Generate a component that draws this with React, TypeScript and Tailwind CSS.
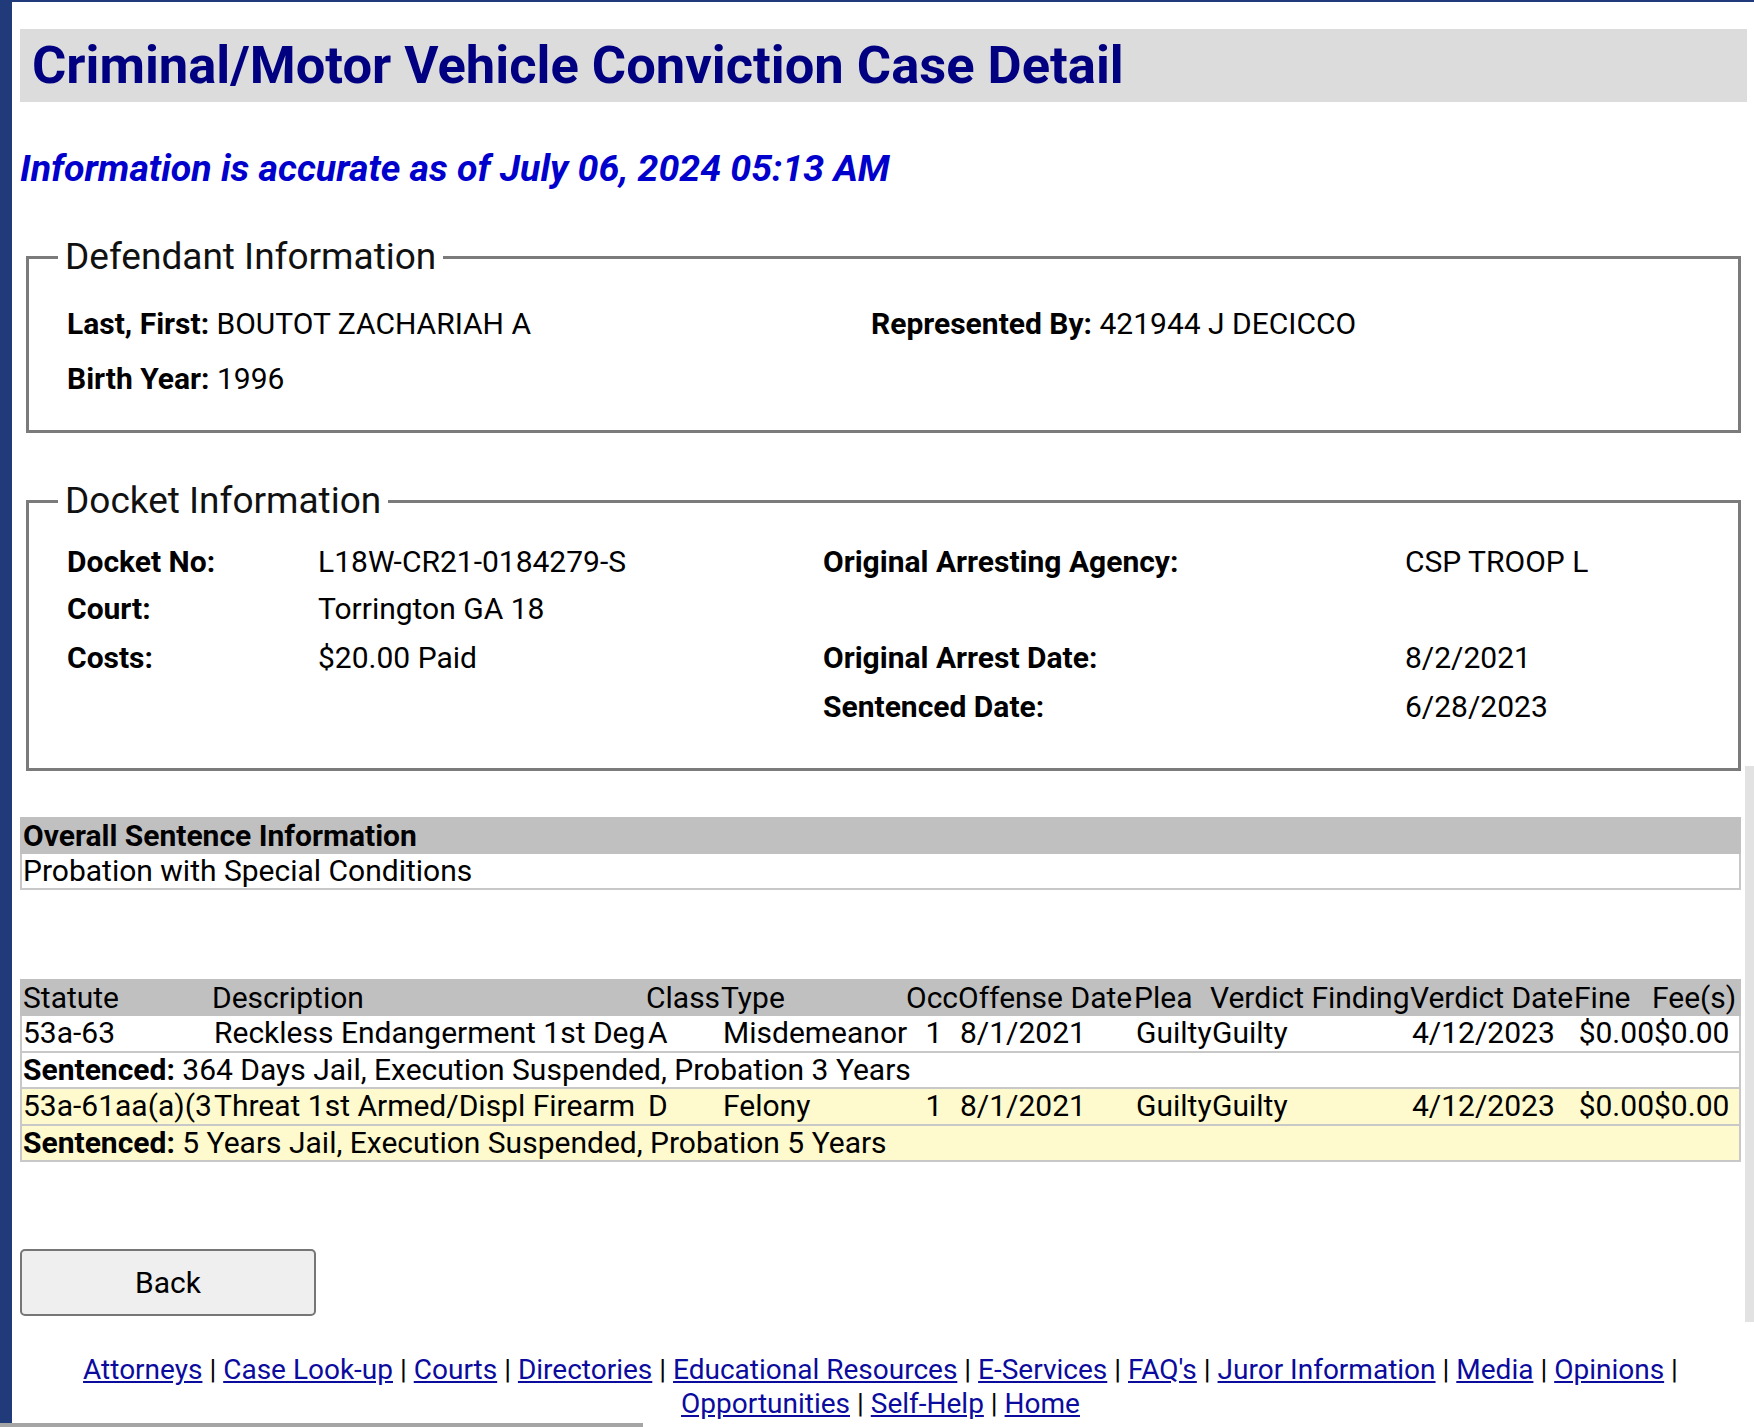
import React from 'react'

const cols = 'grid grid-cols-[192px_434px_75px_185px_52px_176px_76px_200px_164px_78px_1fr] whitespace-nowrap'

const charges = [
  {
    statute: '53a-63',
    desc: 'Reckless Endangerment 1st Deg',
    cls: 'A',
    type: 'Misdemeanor',
    occ: '1',
    offense: '8/1/2021',
    plea: 'Guilty',
    finding: 'Guilty',
    verdict: '4/12/2023',
    fine: '$0.00',
    fee: '$0.00',
    sentence: '364 Days Jail, Execution Suspended, Probation 3 Years',
    yellow: false,
  },
  {
    statute: '53a-61aa(a)(3',
    desc: 'Threat 1st Armed/Displ Firearm',
    cls: 'D',
    type: 'Felony',
    occ: '1',
    offense: '8/1/2021',
    plea: 'Guilty',
    finding: 'Guilty',
    verdict: '4/12/2023',
    fine: '$0.00',
    fee: '$0.00',
    sentence: '5 Years Jail, Execution Suspended, Probation 5 Years',
    yellow: true,
  },
]

const links = [
  'Attorneys',
  'Case Look-up',
  'Courts',
  'Directories',
  'Educational Resources',
  'E-Services',
  "FAQ's",
  'Juror Information',
  'Media',
  'Opinions',
]

function Legend({ children }: { children: React.ReactNode }) {
  return <legend className="px-[7px] text-[37px] leading-[38px] text-[#111]">{children}</legend>
}

export default function App() {
  return (
    <div className="relative min-h-screen overflow-hidden border-l-[12px] border-t-2 border-[#213a7a] bg-white font-['Roboto','Liberation_Sans',sans-serif] text-black">
      <div className="pl-2 pr-[7px] pb-10">
        {/* Title */}
        <div className="mt-[27px] flex h-[73px] items-center bg-[#dcdcdc] pl-3">
          <h1 className="text-[52.5px] font-bold leading-none text-[#000080]">
            Criminal/Motor Vehicle Conviction Case Detail
          </h1>
        </div>

        <p className="mt-[46px] text-[37.5px] font-bold italic leading-[40px] text-[#0000cd]">
          Information is accurate as of July 06, 2024 05:13 AM
        </p>

        {/* Defendant */}
        <fieldset className="mx-[6px] mt-[50px] border-[3px] border-[#7b7b7b] pl-[29px] pb-[24px] pt-[20px]">
          <Legend>Defendant Information</Legend>
          <div className="grid grid-cols-[804px_1fr] grid-rows-[55px_55px] items-center pl-[9px] text-[30px]">
            <div>
              <span className="font-bold">Last, First:</span> BOUTOT ZACHARIAH A
            </div>
            <div>
              <span className="font-bold">Represented By:</span> 421944 J DECICCO
            </div>
            <div>
              <span className="font-bold">Birth Year:</span> 1996
            </div>
            <div />
          </div>
        </fieldset>

        {/* Docket */}
        <fieldset className="mx-[6px] mt-[49px] border-[3px] border-[#7b7b7b] pl-[29px] pb-[37px] pt-[18px]">
          <Legend>Docket Information</Legend>
          <div className="grid grid-cols-[251px_505px_582px_1fr] grid-rows-[46px_48px_50px_49px] items-center pl-[9px] text-[30px]">
            <div className="font-bold">Docket No:</div>
            <div>L18W-CR21-0184279-S</div>
            <div className="font-bold">Original Arresting Agency:</div>
            <div>CSP TROOP L</div>

            <div className="font-bold">Court:</div>
            <div>Torrington GA 18</div>
            <div />
            <div />

            <div className="font-bold">Costs:</div>
            <div>$20.00 Paid</div>
            <div className="font-bold">Original Arrest Date:</div>
            <div>8/2/2021</div>

            <div />
            <div />
            <div className="font-bold">Sentenced Date:</div>
            <div>6/28/2023</div>
          </div>
        </fieldset>

        {/* Overall sentence */}
        <div className="mr-[6px] mt-[46px] text-[30px] leading-none">
          <div className="flex h-[37px] items-center bg-[#c0c0c0] pl-[3px] font-bold">
            Overall Sentence Information
          </div>
          <div className="flex h-[36px] items-center border-x-2 border-b-2 border-[#c8c8c8] pl-[1px]">
            Probation with Special Conditions
          </div>
        </div>

        {/* Charges */}
        <div className="mr-[6px] mt-[89px] text-[30px] leading-none">
          <div className={`${cols} h-[37px] items-center bg-[#c0c0c0]`}>
            <div className="pl-[3px]">Statute</div>
            <div>Description</div>
            <div>Class</div>
            <div>Type</div>
            <div>Occ</div>
            <div>Offense Date</div>
            <div>Plea</div>
            <div>Verdict Finding</div>
            <div>Verdict Date</div>
            <div>Fine</div>
            <div>Fee(s)</div>
          </div>
          <div className="border-x-2 border-[#c8c8c8]">
            {charges.map((c) => (
              <div key={c.statute} className={c.yellow ? 'bg-[#fffacd]' : 'bg-white'}>
                <div className={`${cols} h-[36.5px] items-center border-b-2 border-[#c8c8c8]`}>
                  <div className="pl-[1px]">{c.statute}</div>
                  <div>{c.desc}</div>
                  <div>{c.cls}</div>
                  <div>{c.type}</div>
                  <div className="text-center">{c.occ}</div>
                  <div>{c.offense}</div>
                  <div>{c.plea}</div>
                  <div>{c.finding}</div>
                  <div>{c.verdict}</div>
                  <div className="text-right">{c.fine}</div>
                  <div>{c.fee}</div>
                </div>
                <div className="flex h-[36.5px] items-center border-b-2 border-[#c8c8c8] pl-[1px]">
                  <span className="font-bold">Sentenced:</span>&nbsp;{c.sentence}
                </div>
              </div>
            ))}
          </div>
        </div>

        {/* Back */}
        <button className="mt-[87px] h-[67px] w-[296px] rounded-[5px] border-2 border-[#767676] bg-[#efefef] text-[30px]">
          Back
        </button>

        {/* Footer */}
        <div className="mr-[6px] mt-[37px] text-center text-[28px] leading-[34px]">
          {links.map((l) => (
            <React.Fragment key={l}>
              <a href="#" className="text-[#0b0b9e] underline">
                {l}
              </a>{' '}
              |{' '}
            </React.Fragment>
          ))}
          <br />
          <a href="#" className="text-[#0b0b9e] underline">Opportunities</a> |{' '}
          <a href="#" className="text-[#0b0b9e] underline">Self-Help</a> |{' '}
          <a href="#" className="text-[#0b0b9e] underline">Home</a>
        </div>
      </div>

      {/* scroll thumb + browser bar overlays */}
      <div className="absolute right-0 top-[764px] h-[556px] w-[9px] bg-[#e2e2e2]" />
      <div className="fixed bottom-0 left-0 h-[4px] w-[643px] bg-[#a5a5a5]" />
    </div>
  )
}
